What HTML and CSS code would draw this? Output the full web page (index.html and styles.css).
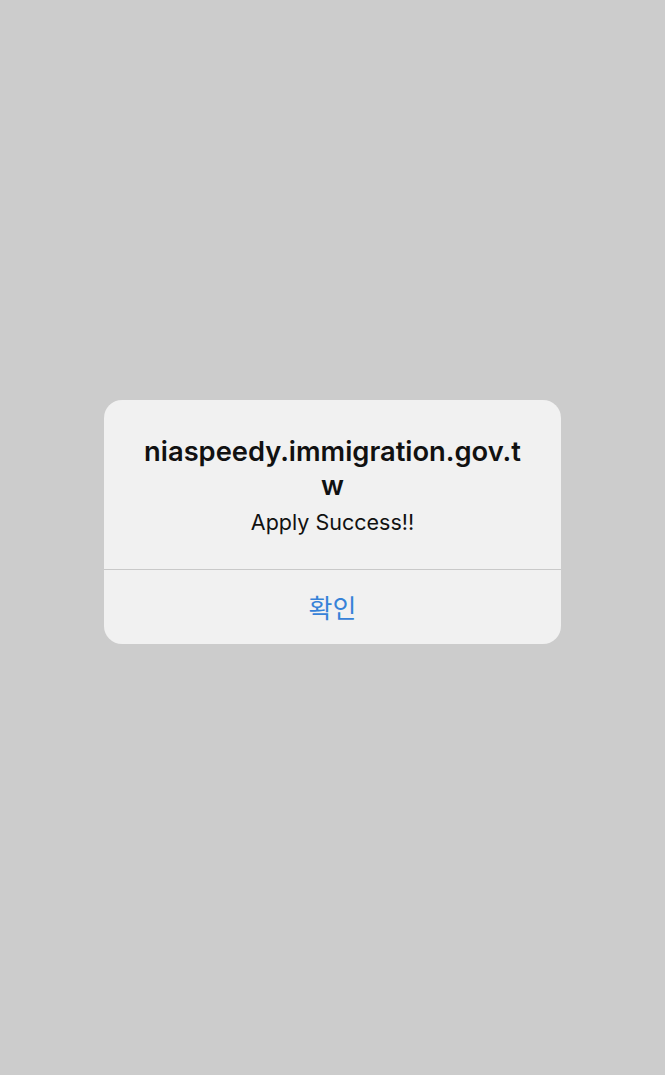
FILE: index.html
```html
<!DOCTYPE html>
<html lang="ko">
<head>
<meta charset="utf-8">
<title>Alert</title>
<link rel="stylesheet" href="styles.css">
</head>
<body>
<div class="screen">
  <div class="alert">
    <div class="alert-body">
      <div class="alert-title">niaspeedy.immigration.gov.tw</div>
      <div class="alert-message">Apply Success!!</div>
    </div>
    <div class="alert-actions">
      <button class="alert-button">확인</button>
    </div>
  </div>
</div>
</body>
</html>
```

FILE: styles.css
```css
html, body {
  margin: 0;
  padding: 0;
}
body {
  background: #cccccc;
  font-family: "Inter", "Liberation Sans", "Noto Sans CJK KR", sans-serif;
}
.screen {
  width: 665px;
  height: 1075px;
  padding-top: 400px;
  box-sizing: border-box;
}
.alert {
  width: 457px;
  margin-left: 104px;
  background: #f1f1f1;
  border-radius: 18px;
  overflow: hidden;
}
.alert-body {
  padding: 35px 20px 34px;
  display: flex;
  flex-direction: column;
  align-items: center;
  gap: 6px;
  border-bottom: 1px solid #c9c9c9;
}
.alert-title {
  width: 388px;
  font-size: 27.3px;
  line-height: 34px;
  font-weight: 600;
  color: #111111;
  text-align: center;
  word-break: break-all;
}
.alert-message {
  font-size: 21.5px;
  line-height: 26px;
  color: #111111;
  text-align: center;
}
.alert-actions {
  height: 74px;
  display: flex;
  align-items: center;
  justify-content: center;
}
.alert-button {
  border: none;
  background: transparent;
  padding: 0;
  font-family: "Noto Sans CJK KR", sans-serif;
  font-size: 26px;
  line-height: 34px;
  color: #3682d8;
}
```
